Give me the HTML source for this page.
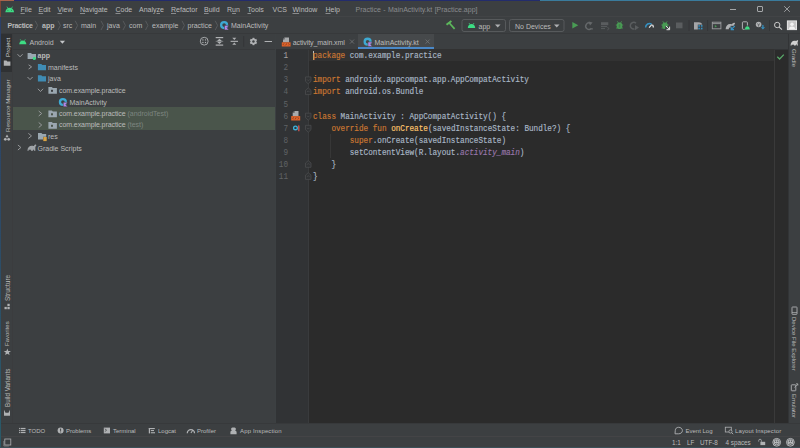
<!DOCTYPE html>
<html><head><meta charset="utf-8">
<style>
*{margin:0;padding:0;box-sizing:border-box}
html,body{width:800px;height:448px;overflow:hidden;background:#3c3f41}
body{position:relative;font-family:"Liberation Sans",sans-serif;color:#bbbbbb;font-size:7px}
.a{position:absolute;white-space:nowrap}
svg.a{overflow:visible}
.menu u{text-decoration:underline;text-underline-offset:1px;text-decoration-thickness:0.5px;text-decoration-color:#8a8c8e}
.menu span{position:absolute;top:5.2px;font-size:7px;line-height:10px;color:#bbbbbb}
.nav span{position:absolute;top:21px;font-size:7px;line-height:10px;color:#bbbbbb}
.code{position:absolute;left:313px;font-family:"Liberation Mono",monospace;font-size:7.67px;-webkit-text-stroke:0.15px currentColor;line-height:12.1px;height:12.1px;color:#a9b7c6;white-space:pre;transform:scaleY(1.08);transform-origin:0 8.1px}
.ln{position:absolute;left:276px;width:12px;text-align:right;font-family:"Liberation Mono",monospace;font-size:7.67px;line-height:12.1px;height:12.1px;color:#606366;transform:scaleY(1.08);transform-origin:0 8.1px}
.kw{color:#cc7832}
.fn{color:#ffc66d}
.pu{color:#9876aa;font-style:italic}
.tree span{position:absolute;font-size:7px;line-height:10px;color:#bbbbbb}
.bt{position:absolute;top:426px;font-size:6px;line-height:10px;color:#bbbbbb}
.st{position:absolute;top:437.7px;font-size:6.3px;line-height:10px;color:#bbbbbb}
.vl{position:absolute;font-size:6px;line-height:7px;color:#bbbbbb;white-space:nowrap;transform-origin:0 0;transform:rotate(-90deg)}
.vr{position:absolute;font-size:6px;line-height:7px;color:#bbbbbb;white-space:nowrap;transform-origin:0 0;transform:rotate(90deg)}
</style></head><body>
<!-- desktop edges -->
<div class="a" style="left:0;top:0;width:1px;height:448px;background:linear-gradient(#2c3f68,#2d4a66 50%,#2a5a68)"></div>
<div class="a" style="left:0;top:0;width:800px;height:1px;background:#232c6c"></div>
<div class="a" style="left:0;top:0;width:14px;height:1px;background:#a8634c"></div>
<div class="a" style="left:540px;top:0;width:260px;height:1px;background:#3a7b9c"></div>
<div class="a" style="left:0;top:1px;width:1px;height:16px;background:#7a4436"></div>
<div class="a" style="left:0;top:447px;width:800px;height:1px;background:#3b4f57"></div>

<!-- ===== menu bar ===== -->
<div class="a" style="left:1px;top:16px;width:799px;height:1px;background:#424446"></div>
<svg class="a" style="left:4.6px;top:5.6px" width="9.4" height="6.5" viewBox="0 0 10 7"><path d="M0.3 6.7 C0.5 3.6 2.4 1.8 5 1.8 C7.6 1.8 9.5 3.6 9.7 6.7Z" fill="#3ddc84"/><path d="M2 0.7 L3 2.3 M8 0.7 L7 2.3" stroke="#3ddc84" stroke-width="0.8"/><circle cx="3.1" cy="4.6" r="0.45" fill="#2b3a30"/><circle cx="6.9" cy="4.6" r="0.45" fill="#2b3a30"/></svg>
<div class="menu">
<span style="left:20.5px"><u>F</u>ile</span><span style="left:38.5px"><u>E</u>dit</span><span style="left:57.5px"><u>V</u>iew</span><span style="left:80px"><u>N</u>avigate</span><span style="left:115.5px"><u>C</u>ode</span><span style="left:139px">Analy<u>z</u>e</span><span style="left:171px"><u>R</u>efactor</span><span style="left:204px"><u>B</u>uild</span><span style="left:227px">R<u>u</u>n</span><span style="left:247.5px"><u>T</u>ools</span><span style="left:272.5px">VCS</span><span style="left:292.5px"><u>W</u>indow</span><span style="left:325.5px"><u>H</u>elp</span>
<span style="left:355.5px;color:#8a8c8e;word-spacing:0.5px">Practice - MainActivity.kt [Practice.app]</span>
</div>
<!-- window controls -->
<div class="a" style="left:729.5px;top:8.6px;width:6px;height:1px;background:#a4a6a8"></div>
<div class="a" style="left:756.5px;top:5.6px;width:6.6px;height:6.4px;border:0.9px solid #a4a6a8;border-radius:1px"></div>
<svg class="a" style="left:784px;top:5.7px" width="6" height="6"><path d="M0.2 0.2 L5.8 5.8 M5.8 0.2 L0.2 5.8" stroke="#a4a6a8" stroke-width="0.9"/></svg>

<!-- ===== nav bar ===== -->
<div class="a" style="left:1px;top:33px;width:799px;height:1px;background:#37393b"></div>
<div class="nav">
<span style="left:7.5px;font-weight:bold;letter-spacing:-0.25px">Practice</span>
<span style="left:42px;font-weight:bold">app</span>
<span style="left:63px">src</span>
<span style="left:81px">main</span>
<span style="left:107px">java</span>
<span style="left:129px">com</span>
<span style="left:152px">example</span>
<span style="left:187.5px">practice</span>
<span style="left:231px">MainActivity</span>
</div>
<svg class="a" style="left:0;top:0" width="800" height="34">
<g stroke="#5d6062" stroke-width="0.8" fill="none">
<path d="M35.2 20.8 L37.6 25.4 L35.2 30"/>
<path d="M58.0 20.8 L60.4 25.4 L58.0 30"/>
<path d="M75.2 20.8 L77.6 25.4 L75.2 30"/>
<path d="M101.0 20.8 L103.4 25.4 L101.0 30"/>
<path d="M123.0 20.8 L125.4 25.4 L123.0 30"/>
<path d="M145.5 20.8 L147.9 25.4 L145.5 30"/>
<path d="M182.0 20.8 L184.4 25.4 L182.0 30"/>
<path d="M215.2 20.8 L217.6 25.4 L215.2 30"/>
</g>
<!-- class icon -->
<circle cx="224.10" cy="25.10" r="2.95" fill="none" stroke="#3ea9d2" stroke-width="2.3"/><path d="M224.50 25.40 L228.90 25.40 L226.90 27.65 L228.90 29.90 L224.50 29.90 Z" fill="#b286e8" stroke="#3c3f41" stroke-width="0.5"/>
<!-- hammer -->
<path d="M446.5 24.8 L451.4 21" stroke="#5db85c" stroke-width="1.9"/>
<path d="M449.3 23 L454.6 28.9" stroke="#5db85c" stroke-width="1.7"/>
<!-- app combo -->
<rect x="462" y="19.5" width="43.5" height="12" rx="2" fill="none" stroke="#5e6163" stroke-width="0.8"/>
<path d="M467.8 28 C467.9 25.5 469.5 24 471.5 24 C473.5 24 475.1 25.5 475.2 28Z" fill="#3ddc84"/>
<path d="M469 23 L469.8 24.4 M474 23 L473.2 24.4" stroke="#3ddc84" stroke-width="0.7"/>
<path d="M495 24.6 L500.5 24.6 L497.75 27.6Z" fill="#afb1b3"/>
<!-- no devices combo -->
<rect x="509.5" y="19.5" width="54.5" height="12" rx="2" fill="none" stroke="#5e6163" stroke-width="0.8"/>
<path d="M554 24.6 L559.5 24.6 L556.75 27.6Z" fill="#afb1b3"/>
<!-- run -->
<path d="M572.3 22 L578.3 25.3 L572.3 28.6Z" fill="#499c54"/>
<!-- rerun dim -->
<path d="M590.6 23.4 A3.2 3.2 0 1 0 591.4 28.2" fill="none" stroke="#65686a" stroke-width="1.4"/>
<path d="M588.6 21.5 L592.6 22.6 L590 25.6Z" fill="#65686a"/>
<circle cx="592" cy="28.9" r="0.8" fill="#65686a"/>
<!-- apply changes dim -->
<rect x="601" y="22.2" width="7.3" height="3" fill="#5a5d5f"/>
<g stroke="#5a5d5f" stroke-width="1"><path d="M601 26.6 H607 M601 28.6 H605"/></g>
<path d="M607.3 27.2 L609.2 28.6 L607.3 30" fill="none" stroke="#5a5d5f" stroke-width="0.8"/>
<!-- debug bug -->
<ellipse cx="619.5" cy="25.8" rx="2.8" ry="3.2" fill="#499c54"/>
<path d="M617.3 21.3 L618.5 23 M621.7 21.3 L620.5 23 M615.8 25 H623.2 M616 28 H623" stroke="#499c54" stroke-width="0.8"/>
<rect x="618.7" y="24.2" width="1.6" height="3.5" fill="#3c3f41" opacity="0.35"/>
<!-- attach debugger dim -->
<path d="M636 23.2 A3.4 3.4 0 1 0 634.5 29" fill="none" stroke="#5a5d5f" stroke-width="1.5"/>
<path d="M635 25 L639 27.6 L635 30.2Z" fill="#5a5d5f"/>
<!-- profiler -->
<path d="M645.6 27.4 A3.9 3.9 0 0 1 651.6 24.1" fill="none" stroke="#3592c4" stroke-width="1.5"/>
<path d="M652.4 24.8 A3.9 3.9 0 0 1 653.4 27.4" fill="none" stroke="#d8d8d8" stroke-width="1.4"/>
<path d="M649.1 27.6 L651.8 24.6" stroke="#e8e8e8" stroke-width="1.2"/>
<!-- bug with arrow -->
<ellipse cx="665" cy="25.8" rx="2.8" ry="3.2" fill="#499c54"/>
<path d="M662.8 21.3 L664 23 M667.2 21.3 L666 23 M661.3 25 H668.7 M661.5 28 H668" stroke="#499c54" stroke-width="0.8"/>
<path d="M665.2 25.6 L670 30.2 H665.2Z" fill="#3c3f41"/>
<path d="M665.8 25.9 L669.3 29.4 M666.5 29.7 H669.6 V26.6" fill="none" stroke="#e8e8e8" stroke-width="1"/>
<!-- stop dim -->
<rect x="676" y="22.5" width="6.5" height="5.8" fill="#5a5d5f"/>
<path d="M689 20 V31" stroke="#323436" stroke-width="0.8"/>
<!-- device manager -->
<path d="M694 22.3 H698.5 C700.8 22.3 702.3 23.6 702.3 25 V29.6 H694Z" fill="#a4a6a8"/>
<rect x="697.8" y="24.6" width="5.2" height="5.2" fill="#3c3f41"/>
<g fill="#3592c4"><rect x="698.3" y="25.1" width="1.6" height="1.6"/><rect x="700.9" y="25.1" width="1.6" height="1.6"/><rect x="698.3" y="27.7" width="1.6" height="1.6"/><rect x="700.9" y="27.7" width="1.6" height="1.6"/></g>
<path d="M707.6 20 V31" stroke="#323436" stroke-width="0.8"/>
<!-- terminal window -->
<rect x="712.3" y="22.2" width="8.6" height="6.6" fill="none" stroke="#9a9c9e" stroke-width="0.9"/>
<path d="M712.3 23.6 H720.9" stroke="#9a9c9e" stroke-width="0.9"/>
<path d="M714.8 25 L717 26.2 L714.8 27.4Z" fill="#499c54"/>
<!-- sync gradle -->
<path d="M725.6 29.2 C725.8 26 727.6 24 730 24 C731.2 24 731.8 24.5 732.5 23.5 C733.1 22.6 734.4 22.3 734.9 23.1 C735.3 23.8 734.6 24.6 734.1 24.8 L733.6 26 H731.8 L731 27.4 C730.3 27.7 729.6 27.7 729 27.4 L728.8 29.2 Z" fill="#afb1b3"/>
<rect x="730.6" y="25.8" width="5" height="4.2" fill="#3c3f41"/>
<path d="M734.8 26 L731.4 29.4 M731.2 26.8 V29.6 H734" fill="none" stroke="#3592c4" stroke-width="1.1"/>
<!-- phone android -->
<rect x="742.4" y="21.8" width="5" height="7.5" rx="0.8" fill="none" stroke="#afb1b3" stroke-width="1"/>
<rect x="744.5" y="25.6" width="5.6" height="4.2" fill="#3c3f41"/>
<path d="M744.9 29.5 C745 27.4 746.1 26.2 747.35 26.2 C748.6 26.2 749.7 27.4 749.8 29.5Z" fill="#3ddc84"/>
<!-- cube arrow -->
<circle cx="758.6" cy="24.5" r="2.8" fill="#afb1b3"/>
<path d="M757.1 23.6 L758.6 24.7 L760.1 23.6 M758.6 24.7 V26.6" stroke="#3c3f41" stroke-width="0.6" fill="none"/>
<rect x="762.3" y="24.9" width="1.2" height="2.6" fill="#3592c4"/>
<path d="M760.8 27.2 H765 L762.9 29.5Z" fill="#3592c4"/>
<path d="M769.5 20 V31" stroke="#323436" stroke-width="0.8"/>
<!-- search -->
<circle cx="777.2" cy="25" r="2.7" fill="none" stroke="#c8c8c8" stroke-width="1"/>
<path d="M779.1 27 L782 29.6" stroke="#c8c8c8" stroke-width="1.1"/>
<!-- avatar -->
<rect x="786.9" y="20.4" width="10.1" height="9.7" fill="#e4e4e4"/>
<rect x="787.9" y="21.4" width="8.1" height="7.7" fill="#c6c6c6"/>
<circle cx="792" cy="24.2" r="1.7" fill="#f2f2f2"/>
<path d="M788.9 29.1 C788.9 27.3 790.3 26.5 792 26.5 C793.7 26.5 795.1 27.3 795.1 29.1Z" fill="#f2f2f2"/>
</svg>
<span class="a" style="left:478.5px;top:21.5px;font-size:7px;line-height:10px">app</span>
<span class="a" style="left:515px;top:21.5px;font-size:7px;line-height:10px">No Devices</span>

<!-- ===== left tool strip ===== -->
<div class="a" style="left:12px;top:34px;width:1px;height:389px;background:#3b3c3e"></div>
<div class="a" style="left:1px;top:34px;width:11px;height:38px;background:#2f3133"></div>
<span class="vl" style="left:4px;top:57.1px;font-size:6.2px;color:#d4d4d4">Project</span>
<span class="vl" style="left:4.1px;top:132.2px;font-size:6.2px">Resource Manager</span>
<span class="vl" style="left:4.1px;top:300.6px;font-size:6.45px">Structure</span>
<span class="vl" style="left:4.2px;top:346px">Favorites</span>
<span class="vl" style="left:4.1px;top:406.5px;font-size:6.3px">Build Variants</span>
<svg class="a" style="left:0;top:0" width="13" height="448">
<path d="M3.8 60.5 H6.5 L7.3 61.5 H10.4 V65.8 H3.8Z" fill="#afb1b3"/>
<g fill="#afb1b3"><path d="M7 134.4 L8.6 137.3 L5.4 137.3Z"/><circle cx="5.3" cy="139.3" r="1.4"/><circle cx="8.7" cy="139.3" r="1.4"/></g>
<g fill="#afb1b3"><rect x="7.4" y="303.8" width="2.3" height="2.3"/><rect x="4.5" y="306.9" width="2.3" height="2.3"/><rect x="7.4" y="306.9" width="2.3" height="2.3"/></g>
<path d="M7.35 348.5 L8.3 350.9 L11 351 L8.9 352.6 L9.6 355.1 L7.35 353.7 L5.1 355.1 L5.8 352.6 L3.7 351 L6.4 350.9Z" fill="#afb1b3"/>
<path d="M4 409.8 L5.5 412.7 L8.5 412.7 L10 409.8 V415.7 H4Z" fill="#afb1b3"/>
</svg>

<!-- ===== project header ===== -->
<div class="a" style="left:13px;top:48.5px;width:262px;height:1px;background:#37393b"></div>
<svg class="a" style="left:18.8px;top:38.6px" width="7.6" height="5.5" viewBox="0 0 10 7"><path d="M0.3 6.7 C0.5 3.6 2.4 1.8 5 1.8 C7.6 1.8 9.5 3.6 9.7 6.7Z" fill="#3ddc84"/><path d="M1.6 0.2 L2.9 2.3 M8.4 0.2 L7.1 2.3" stroke="#3ddc84" stroke-width="0.8"/></svg>
<span class="a" style="left:29.5px;top:37.5px;font-size:7px;line-height:10px">Android</span>
<svg class="a" style="left:0;top:0" width="276" height="50">
<path d="M59.8 40.7 L65 40.7 L62.4 43.8Z" fill="#c4c6c8"/>
<!-- locate -->
<circle cx="204.2" cy="41.2" r="3.9" fill="none" stroke="#afb1b3" stroke-width="0.9"/>
<g fill="#afb1b3"><circle cx="202.9" cy="39.9" r="0.7"/><circle cx="205.5" cy="39.9" r="0.7"/><circle cx="202.9" cy="42.5" r="0.7"/><circle cx="205.5" cy="42.5" r="0.7"/></g>
<!-- expand all -->
<g fill="#afb1b3"><rect x="215.7" y="37" width="7.5" height="1.2"/><rect x="215.7" y="44.5" width="7.5" height="1.2"/>
<path d="M217 41 L219.45 38.8 L221.9 41Z"/><path d="M217 41.7 L219.45 43.9 L221.9 41.7Z"/><rect x="215.7" y="40.8" width="7.5" height="1.1" opacity="0.5"/></g>
<!-- collapse all -->
<g fill="#afb1b3"><rect x="230.6" y="40.8" width="7.4" height="1.1"/>
<path d="M232.3 37.8 L236.3 37.8 L234.3 39.9Z"/><path d="M232.3 44.7 L236.3 44.7 L234.3 42.6Z"/></g>
<path d="M243.7 36 V46.8" stroke="#323436" stroke-width="0.8"/>
<!-- gear -->
<g transform="translate(253.45 41.5)">
<circle r="2.9" fill="#afb1b3"/>
<g fill="#afb1b3"><rect x="-0.9" y="-3.7" width="1.8" height="7.4"/><rect x="-0.9" y="-3.7" width="1.8" height="7.4" transform="rotate(60)"/><rect x="-0.9" y="-3.7" width="1.8" height="7.4" transform="rotate(120)"/></g>
<circle r="1.2" fill="#3c3f41"/>
</g>
<rect x="264.6" y="41" width="7.4" height="1" fill="#afb1b3"/>
</svg>

<!-- project panel border -->
<div class="a" style="left:275px;top:34px;width:1px;height:389px;background:#3c4042"></div>

<!-- ===== tree ===== -->
<div class="a" style="left:13px;top:106.9px;width:262px;height:23.5px;background:#4a554b"></div>
<div class="tree">
<span style="left:37.5px;top:51px;font-weight:bold">app</span>
<span style="left:48px;top:62.5px">manifests</span>
<span style="left:48px;top:74px">java</span>
<span style="left:59px;top:85.5px;letter-spacing:-0.08px">com.example.practice</span>
<span style="left:69.5px;top:97.5px">MainActivity</span>
<span style="left:59px;top:108.5px"><span style="position:static;letter-spacing:-0.08px">com.example.practice</span> <span style="position:static;color:#7d8580">(androidTest)</span></span>
<span style="left:59px;top:120px"><span style="position:static;letter-spacing:-0.08px">com.example.practice</span> <span style="position:static;color:#7d8580">(test)</span></span>
<span style="left:48px;top:131.5px">res</span>
<span style="left:37.5px;top:143.7px">Gradle Scripts</span>
</div>
<svg class="a" style="left:0;top:0" width="276" height="160">
<g stroke="#9a9c9e" stroke-width="0.95" fill="none">
<path d="M17.5 54.2 L20.05 56.8 L22.6 54.2"/>
<path d="M28.6 64.8 L31.6 66.9 L28.6 69"/>
<path d="M27.5 77 L30.05 79.6 L32.6 77"/>
<path d="M37.9 88.8 L40.5 91.5 L43.1 88.8"/>
<path d="M38.7 111 L41.7 113.5 L38.7 116"/>
<path d="M38.7 122.5 L41.7 125 L38.7 127.5"/>
<path d="M28.4 133.4 L31.5 135.9 L28.4 138.4"/>
<path d="M17.9 145 L20.9 147.5 L17.9 150"/>
</g>
<!-- app module folder -->
<path d="M27.6 53 H31 L32 54 H36 V59 H27.6Z" fill="#9aa7b0"/>
<circle cx="34.3" cy="58.4" r="1.6" fill="#3ddc84"/>
<!-- blue folders -->
<path d="M37.9 64.1 H41.3 L42.3 65.1 H46 V70.2 H37.9Z" fill="#3f8cb4"/>
<path d="M37.9 75.2 H41.3 L42.3 76.2 H46 V81.4 H37.9Z" fill="#3f8cb4"/>
<!-- package folders -->
<g fill="#9aa7b0">
<path d="M48.4 87 H51.8 L52.8 88 H56.9 V93.7 H48.4Z"/>
<path d="M48.4 110.5 H51.8 L52.8 111.5 H56.9 V117.2 H48.4Z"/>
<path d="M48.4 122 H51.8 L52.8 123 H56.9 V128.7 H48.4Z"/>
</g>
<g fill="#3c3f41"><rect x="51" y="89.8" width="2" height="2"/></g>
<g fill="#49544a"><rect x="51" y="113.3" width="2" height="2"/><rect x="51" y="124.8" width="2" height="2"/></g>
<!-- class icon -->
<circle cx="62.90" cy="102.00" r="2.95" fill="none" stroke="#3ea9d2" stroke-width="2.3"/><path d="M63.30 102.30 L67.70 102.30 L65.70 104.55 L67.70 106.80 L63.30 106.80 Z" fill="#b286e8" stroke="#3c3f41" stroke-width="0.5"/>
<!-- res folder -->
<path d="M38 133 H41.4 L42.4 134 H46.2 V139.6 H38Z" fill="#9aa7b0"/>
<rect x="43" y="136.8" width="3.8" height="4.3" fill="#3c3f41"/><rect x="43.3" y="137" width="3.4" height="4.1" fill="#d9a343"/>
<!-- gradle elephant -->
<path d="M27.4 150.8 C27.6 147.6 29.4 145.8 31.8 145.8 C33 145.8 33.6 146.4 34.2 145.4 C34.7 144.5 35.8 144.2 36.2 145 C36.5 145.7 35.9 146.4 35.5 146.6 C35.2 147.4 35.4 148.4 35.4 150.8 H34.1 L33.8 149.2 L32.8 150.8 H31 L30.8 149.6 C30.1 149.9 29.4 149.9 28.8 149.6 L28.6 150.8Z" fill="#a0a4a8"/>
</svg>

<!-- ===== tabs ===== -->
<div class="a" style="left:358px;top:34px;width:76px;height:13.5px;background:#46494b"></div>
<div class="a" style="left:276px;top:48.7px;width:512px;height:1px;background:#323436"></div>
<span class="a" style="left:292.7px;top:37.5px;font-size:7px;line-height:10px;letter-spacing:-0.07px">activity_main.xml</span>
<span class="a" style="left:374.5px;top:37.5px;font-size:7px;line-height:10px">MainActivity.kt</span>
<div class="a" style="left:358px;top:47px;width:76px;height:2px;background:#4a88c7"></div>
<svg class="a" style="left:0;top:0" width="800" height="50">
<path d="M284.4 37.6 H289 V42.3 H283 V39.2Z" fill="#a8aaac"/>
<path d="M284.4 37.6 V39.2 H283" fill="none" stroke="#3c3f41" stroke-width="0.5"/>
<rect x="281.8" y="42.3" width="8.8" height="4.2" fill="#e0632a"/>
<path d="M284 43.4 L283.2 44.4 L284 45.4 M288.4 43.4 L289.2 44.4 L288.4 45.4 M285.7 45.4 L286.7 43.4" stroke="#5a3020" stroke-width="0.6" fill="none"/>
<path d="M350 39.6 L354 43.6 M354 39.6 L350 43.6" stroke="#7a7c7e" stroke-width="0.7"/>
<circle cx="367.60" cy="41.70" r="2.95" fill="none" stroke="#3ea9d2" stroke-width="2.3"/><path d="M368.00 42.00 L372.40 42.00 L370.40 44.25 L372.40 46.50 L368.00 46.50 Z" fill="#b286e8" stroke="#46494b" stroke-width="0.5"/>
<path d="M425.6 39.6 L429.6 43.6 M429.6 39.6 L425.6 43.6" stroke="#7a7c7e" stroke-width="0.7"/>
</svg>

<!-- ===== gutter + editor ===== -->
<div class="a" style="left:276px;top:49.5px;width:33px;height:373.5px;background:#313335"></div>
<div class="a" style="left:309px;top:49.5px;width:479px;height:373.5px;background:#2b2b2b"></div>
<div class="a" style="left:309px;top:49.3px;width:465px;height:12.2px;background:#323232"></div>
<div class="a" style="left:774px;top:49.5px;width:1px;height:373.5px;background:#3a3a3a"></div>
<div class="a" style="left:308px;top:49.5px;width:1px;height:373.5px;background:#393b3d"></div>
<div class="a" style="left:312.6px;top:51px;width:1px;height:9.3px;background:#bbbbbb"></div>
<div class="a" style="left:329.6px;top:133.6px;width:1px;height:24px;background:#373737"></div>

<div class="ln" style="top:50.10px;color:#a4a3a3">1</div>
<div class="code" style="top:50.10px"><span class="kw">package</span> com.example.practice</div>
<div class="ln" style="top:62.20px">2</div>
<div class="ln" style="top:74.30px">3</div>
<div class="code" style="top:74.30px"><span class="kw">import</span> androidx.appcompat.app.AppCompatActivity</div>
<div class="ln" style="top:86.40px">4</div>
<div class="code" style="top:86.40px"><span class="kw">import</span> android.os.Bundle</div>
<div class="ln" style="top:98.50px">5</div>
<div class="ln" style="top:110.60px">6</div>
<div class="code" style="top:110.60px"><span class="kw">class</span> MainActivity : AppCompatActivity() {</div>
<div class="ln" style="top:122.70px">7</div>
<div class="code" style="top:122.70px">    <span class="kw">override fun</span> <span class="fn">onCreate</span>(savedInstanceState: Bundle?) {</div>
<div class="ln" style="top:134.80px">8</div>
<div class="code" style="top:134.80px">        <span class="kw">super</span>.onCreate(savedInstanceState)</div>
<div class="ln" style="top:146.90px">9</div>
<div class="code" style="top:146.90px">        setContentView(R.layout.<span class="pu">activity_main</span>)</div>
<div class="ln" style="top:159.00px">10</div>
<div class="code" style="top:159.00px">    }</div>
<div class="ln" style="top:171.10px">11</div>
<div class="code" style="top:171.10px">}</div>
<svg class="a" style="left:0;top:0" width="800" height="200">
<g fill="#313335" stroke="#505254" stroke-width="0.65"><path d="M305.5 76.90 H311 V81.30 L308.25 83.90 L305.5 81.30 Z"/><path d="M307.1 79.50 L308.25 80.70 L309.4 79.50" fill="none"/><path d="M305.5 94.60 H311 V90.30 L308.25 87.90 L305.5 90.30 Z"/><path d="M307.1 92.00 L308.25 90.80 L309.4 92.00" fill="none"/><path d="M305.5 113.20 H311 V117.60 L308.25 120.20 L305.5 117.60 Z"/><path d="M307.1 115.80 L308.25 117.00 L309.4 115.80" fill="none"/><path d="M305.5 125.30 H311 V129.70 L308.25 132.30 L305.5 129.70 Z"/><path d="M307.1 127.90 L308.25 129.10 L309.4 127.90" fill="none"/><path d="M305.5 167.30 H311 V163.00 L308.25 160.60 L305.5 163.00 Z"/><path d="M307.1 164.70 L308.25 163.50 L309.4 164.70" fill="none"/><path d="M305.5 179.40 H311 V175.10 L308.25 172.70 L305.5 175.10 Z"/><path d="M307.1 176.80 L308.25 175.60 L309.4 176.80" fill="none"/></g>
<!-- line 6 icon -->
<path d="M294.3 110.9 H298.5 V116.1 H292.7 V112.5Z" fill="#a8aaac"/>
<path d="M294.3 110.9 V112.5 H292.7" fill="none" stroke="#313335" stroke-width="0.5"/>
<rect x="291.2" y="116.1" width="9" height="4.4" fill="#e0632a"/>
<path d="M293.6 117.3 L292.8 118.3 L293.6 119.3 M297.8 117.3 L298.6 118.3 L297.8 119.3 M295.2 119.3 L296.2 117.3" stroke="#5a3020" stroke-width="0.6" fill="none"/>
<!-- line 7 icon -->
<circle cx="295.45" cy="127.9" r="1.85" fill="none" stroke="#3fb3dc" stroke-width="1.3"/>
<path d="M298.1 126 L298.75 124.8 L299.5 126 V131.2 H298.1Z" fill="#c75450"/>
<!-- check -->
<path d="M777.3 56.8 L779.6 59 L783.8 54.6" fill="none" stroke="#59a869" stroke-width="1.3"/>
</svg>

<!-- ===== right strip ===== -->
<div class="a" style="left:787.8px;top:34px;width:1px;height:389px;background:#323436"></div>
<span class="vr" style="left:797px;top:49px">Gradle</span>
<span class="vr" style="left:797px;top:316.7px">Device File Explorer</span>
<span class="vr" style="left:797px;top:394px">Emulator</span>
<svg class="a" style="left:0;top:0" width="800" height="448">
<path d="M790.5 45.5 C790.8 42.5 792.3 40.8 794.4 40.8 C795.6 40.8 796.3 41.4 796.8 40.6 C797.3 39.8 798.4 40.2 798.1 41 C797.8 41.8 797.4 42.2 797.6 43.2 L797.9 45.5 H796.8 L796.5 44 L795.6 45.5 H794 L793.8 44.4 C793.1 44.7 792.4 44.7 791.8 44.4 L791.5 45.5Z" fill="#d0d0d0"/>
<rect x="792" y="307" width="5" height="7.3" rx="0.5" fill="none" stroke="#afb1b3" stroke-width="0.9"/>
<path d="M792 312.5 H797" stroke="#afb1b3" stroke-width="0.7"/>
<rect x="791.3" y="384.8" width="4.5" height="6" rx="0.5" fill="none" stroke="#afb1b3" stroke-width="0.9"/>
<path d="M794.5 387.5 L797.8 384 M796 383.8 H797.8 V385.6" fill="none" stroke="#afb1b3" stroke-width="0.8"/>
</svg>

<!-- ===== bottom tool bar ===== -->
<div class="a" style="left:1px;top:423px;width:799px;height:1px;background:#37393b"></div>
<span class="bt" style="left:28px">TODO</span>
<span class="bt" style="left:66px">Problems</span>
<span class="bt" style="left:113px">Terminal</span>
<span class="bt" style="left:158px">Logcat</span>
<span class="bt" style="left:197px">Profiler</span>
<span class="bt" style="left:240px;letter-spacing:0.15px">App Inspection</span>
<span class="bt" style="left:685.5px">Event Log</span>
<span class="bt" style="left:735px;letter-spacing:0.12px">Layout Inspector</span>
<svg class="a" style="left:0;top:0" width="800" height="448">
<g fill="#afb1b3">
<!-- todo -->
<rect x="19.1" y="427.9" width="1.3" height="1.2"/><rect x="21" y="427.9" width="4.5" height="1.2"/>
<rect x="19.1" y="429.9" width="1.3" height="1.2"/><rect x="21" y="429.9" width="4.5" height="1.2"/>
<rect x="19.1" y="431.9" width="1.3" height="1.2"/><rect x="21" y="431.9" width="4.5" height="1.2"/>
</g>
<!-- problems -->
<circle cx="60.6" cy="430.5" r="3" fill="#afb1b3"/>
<rect x="60.1" y="428.6" width="1" height="2.3" fill="#3c3f41"/><rect x="60.1" y="431.5" width="1" height="0.9" fill="#3c3f41"/>
<!-- terminal -->
<rect x="103.8" y="427.6" width="6.2" height="5.8" fill="#afb1b3"/>
<path d="M104.8 428.8 L106.6 430.2 L104.8 431.6" stroke="#3c3f41" stroke-width="0.7" fill="none"/>
<!-- logcat -->
<g fill="#afb1b3"><rect x="148.8" y="428" width="6" height="1.1"/><rect x="148.8" y="428" width="1.2" height="5.4"/><rect x="150.8" y="430" width="3.2" height="1.1"/><rect x="150.8" y="432.2" width="4.2" height="1.1"/></g>
<!-- app inspection -->
<path d="M230.4 434.3 V432.3 C230.4 431.1 231.3 430.7 232 430.5 C231.3 430 231.1 429.3 231.1 428.9 C231.1 427.8 232.2 427.4 233.5 427.4 C234.8 427.4 235.9 427.8 235.9 428.9 C235.9 429.3 235.7 430 235 430.5 C235.7 430.7 236.6 431.1 236.6 432.3 V434.3Z" fill="#afb1b3"/>
<path d="M187.3 433.2 A3.6 3.6 0 0 1 194.5 433.2" fill="none" stroke="#afb1b3" stroke-width="1.3"/>
<path d="M190.9 433 L192.9 430" stroke="#afb1b3" stroke-width="1.1"/>
<!-- event log -->
<path d="M675 433.8 L675.3 430.3 C675.3 428.6 676.6 427.3 678.6 427.3 C680.6 427.3 682.4 428.6 682.4 430.6 C682.4 432.6 680.6 433.8 678.6 433.8Z" fill="none" stroke="#afb1b3" stroke-width="0.9"/>
<!-- layout inspector -->
<rect x="725.3" y="427.2" width="6" height="4.8" fill="none" stroke="#afb1b3" stroke-width="0.8"/>
<circle cx="730.5" cy="431.5" r="1.6" fill="#3c3f41" stroke="#afb1b3" stroke-width="0.8"/>
<path d="M731.6 432.6 L733.2 434.2" stroke="#afb1b3" stroke-width="0.9"/>
<!-- bottom-left square -->
<rect x="4.8" y="439" width="6" height="6" fill="none" stroke="#afb1b3" stroke-width="0.8"/>
<path d="M3.8 441 V446 H8.8" fill="none" stroke="#8c8e90" stroke-width="0.7"/>
<!-- lock -->
<rect x="760.4" y="441.8" width="4.8" height="3.3" fill="#afb1b3"/>
<path d="M758.7 441.6 V440.6 A1.35 1.35 0 0 1 761.4 440.6 V441.8" fill="none" stroke="#afb1b3" stroke-width="0.8"/>
<!-- smileys -->
<circle cx="776.7" cy="442.3" r="3.9" fill="#3c3f41" stroke="#b4b6b8" stroke-width="1"/>
<circle cx="776.7" cy="442.3" r="3" fill="#b4b6b8"/>
<g fill="#3c3f41"><rect x="775.2" y="440.6" width="0.9" height="1.2"/><rect x="777.3" y="440.6" width="0.9" height="1.2"/></g>
<path d="M775.1 443.3 Q776.7 444.9 778.3 443.3" stroke="#3c3f41" stroke-width="0.7" fill="none"/>
<circle cx="790.4" cy="442.3" r="3.9" fill="#3c3f41" stroke="#b4b6b8" stroke-width="1"/>
<circle cx="790.4" cy="442.3" r="3" fill="#b4b6b8"/>
<g fill="#3c3f41"><rect x="788.9" y="440.6" width="0.9" height="1.2"/><rect x="791" y="440.6" width="0.9" height="1.2"/></g>
<path d="M788.8 444.5 Q790.4 442.9 792 444.5" stroke="#3c3f41" stroke-width="0.7" fill="none"/>
</svg>

<!-- ===== status bar ===== -->
<div class="a" style="left:1px;top:436px;width:799px;height:1px;background:#444446"></div>
<span class="st" style="left:672px">1:1</span>
<span class="st" style="left:687px">LF</span>
<span class="st" style="left:700px">UTF-8</span>
<span class="st" style="left:725.5px">4 spaces</span>
</body></html>
